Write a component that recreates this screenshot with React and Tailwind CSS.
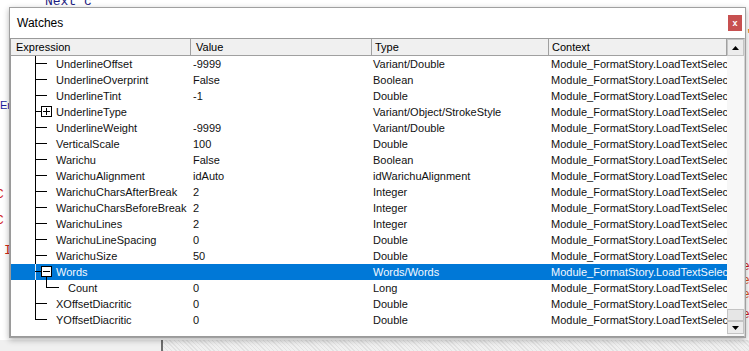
import React from "react";

const CONTEXT = "Module_FormatStory.LoadTextSelection";

const rows = [
  { name: "UnderlineOffset", value: "-9999", type: "Variant/Double" },
  { name: "UnderlineOverprint", value: "False", type: "Boolean" },
  { name: "UnderlineTint", value: "-1", type: "Double" },
  { name: "UnderlineType", value: "", type: "Variant/Object/StrokeStyle", node: "plus" },
  { name: "UnderlineWeight", value: "-9999", type: "Variant/Double" },
  { name: "VerticalScale", value: "100", type: "Double" },
  { name: "Warichu", value: "False", type: "Boolean" },
  { name: "WarichuAlignment", value: "idAuto", type: "idWarichuAlignment" },
  { name: "WarichuCharsAfterBreak", value: "2", type: "Integer" },
  { name: "WarichuCharsBeforeBreak", value: "2", type: "Integer" },
  { name: "WarichuLines", value: "2", type: "Integer" },
  { name: "WarichuLineSpacing", value: "0", type: "Double" },
  { name: "WarichuSize", value: "50", type: "Double" },
  { name: "Words", value: "", type: "Words/Words", node: "minus", selected: true },
  { name: "Count", value: "0", type: "Long", child: true },
  { name: "XOffsetDiacritic", value: "0", type: "Double" },
  { name: "YOffsetDiacritic", value: "0", type: "Double", last: true },
];

// tree connector lines drawn per row
function Tree({ row }) {
  const w = row.child ? 57 : 45;
  return (
    <svg width={w} height="16" className="shrink-0" shapeRendering="crispEdges">
      <line x1="24.5" y1="0" x2="24.5" y2={row.last ? 8 : 16} stroke={row.selected ? "#dfe9f5" : "#000"} />
      {row.node ? (
        <>
          <line x1="24" y1="7.5" x2="30" y2="7.5" stroke="#000" />
          <rect x="30.5" y="2.5" width="10" height="10" fill="#fff" stroke="#000" />
          <line x1="32" y1="7.5" x2="39" y2="7.5" stroke="#000" />
          {row.node === "plus" && <line x1="35.5" y1="4" x2="35.5" y2="11" stroke="#000" />}
          {row.node === "minus" && <line x1="35.5" y1="13" x2="35.5" y2="16" stroke="#000" />}
        </>
      ) : row.child ? (
        <>
          <line x1="35.5" y1="0" x2="35.5" y2="8" stroke="#000" />
          <line x1="35" y1="7.5" x2="48" y2="7.5" stroke="#000" />
        </>
      ) : (
        <line x1="24" y1="7.5" x2="36" y2="7.5" stroke="#000" />
      )}
    </svg>
  );
}

function Arrow({ up }) {
  return (
    <svg width="7" height="4">
      <polygon points={up ? "0,4 7,4 3.5,0" : "0,0 7,0 3.5,4"} fill="#000" />
    </svg>
  );
}

export default function App() {
  return (
    <div className="relative w-[749px] h-[351px] overflow-hidden bg-white font-['Liberation_Sans',Arial,sans-serif]">
      {/* code editor behind */}
      <div className="flex flex-col h-full">
        <div className="flex flex-1 min-h-0 overflow-hidden">
          <div className="flex flex-col w-[120px] font-['Liberation_Mono',monospace] text-[13px] leading-[14px] whitespace-pre">
            <div className="mt-[-5px] h-[14px] pl-[45px] text-[#1a1a80]">Next c</div>
            <div className="mt-[89px] h-[14px] text-[#1c1c9c] font-['Liberation_Sans',sans-serif] text-[11px]">Err</div>
            <div className="mt-[76px] h-[14px] -ml-[4px] text-[#d01818]">C</div>
            <div className="mt-[12px] h-[14px] -ml-[4px] text-[#d01818]">C</div>
            <div className="mt-[16px] h-[14px] pl-[4px] text-[#d02818]">I</div>
          </div>
          <div className="flex-1" />
          <div className="flex flex-col w-[4px] overflow-hidden font-['Liberation_Mono',monospace] text-[13px] leading-[14px]">
            <div className="mt-[28px] h-[14px] text-[#e07a20]">'</div>
            <div className="mt-[218px] h-[14px] -ml-[3px] text-[#d01818]">e</div>
            <div className="h-[14px] -ml-[3px] text-[#e0501a]">e</div>
            <div className="h-[14px] -ml-[3px] text-[#e0501a]">e</div>
            <div className="mt-[6px] h-[14px] -ml-[3px] text-[#d01818]">e</div>
          </div>
        </div>
        <div className="flex h-[11px] shrink-0">
          <div className="w-[161px] bg-[#f0f0f0]" />
          <div className="w-[2px] bg-[#6e6e6e]" />
          <div className="flex-1 bg-[repeating-linear-gradient(45deg,#e2e2e2_0,#e2e2e2_1px,#f0f0f0_1px,#f0f0f0_3px)]" />
        </div>
      </div>

      {/* Watches window */}
      <div className="absolute left-[9px] top-[7px] w-[737px] h-[331px] flex flex-col border border-[#a0a0a0] bg-white shadow-[0_2px_6px_rgba(0,0,0,0.3)]">
        <div className="flex items-center justify-between h-[30px] shrink-0 pl-[7px] pr-[3px]">
          <span className="text-[12px] text-black">Watches</span>
          <div className="w-[14px] h-[16px] flex items-center justify-center bg-[#c75050] text-white text-[9px] font-bold leading-none">x</div>
        </div>
        <div className="flex flex-1 min-h-0 border border-[#9a9a9a] border-r-[#d4d4d4] text-[11px] text-[#111]">
          <div className="flex flex-col w-[716px]">
            <div className="flex h-[17px] shrink-0 bg-[#f0f0f0] border-b border-[#a0a0a0] leading-[16px] text-black">
              <div className="w-[180px] pl-[5px] border-r border-[#a0a0a0]">Expression</div>
              <div className="w-[181px] pl-[5px] border-r border-[#a0a0a0]">Value</div>
              <div className="w-[177px] pl-[3px] border-r border-[#a0a0a0]">Type</div>
              <div className="w-[178px] pl-[3px] border-r border-[#a0a0a0]">Context</div>
            </div>
            {rows.map((r) => (
              <div
                key={r.name}
                className={`flex h-[16px] leading-[16px] whitespace-nowrap ${r.selected ? "bg-[#0078d7] text-[#f4f8ff]" : ""}`}
              >
                <div className="w-[180px] flex overflow-hidden">
                  <Tree row={r} />
                  <span>{r.name}</span>
                </div>
                <div className="w-[181px] pl-[2px] overflow-hidden">{r.value}</div>
                <div className="w-[177px] pl-[1px] overflow-hidden">{r.type}</div>
                <div className="w-[178px] pl-[2px] overflow-hidden">{CONTEXT}</div>
              </div>
            ))}
          </div>
          <div className="flex flex-col w-[17px] bg-[#f7f7f7]">
            <div className="h-[17px] flex items-center justify-center bg-[#ececec] border border-[#c4c4c4]">
              <Arrow up />
            </div>
            <div className="flex-1" />
            <div className="h-[12px] bg-[#e6e6e6] border border-[#c4c4c4]" />
            <div className="h-[13px] flex items-center justify-center bg-[#ececec] border border-[#c4c4c4]">
              <Arrow />
            </div>
            <div className="h-[2px]" />
          </div>
        </div>
      </div>
    </div>
  );
}
